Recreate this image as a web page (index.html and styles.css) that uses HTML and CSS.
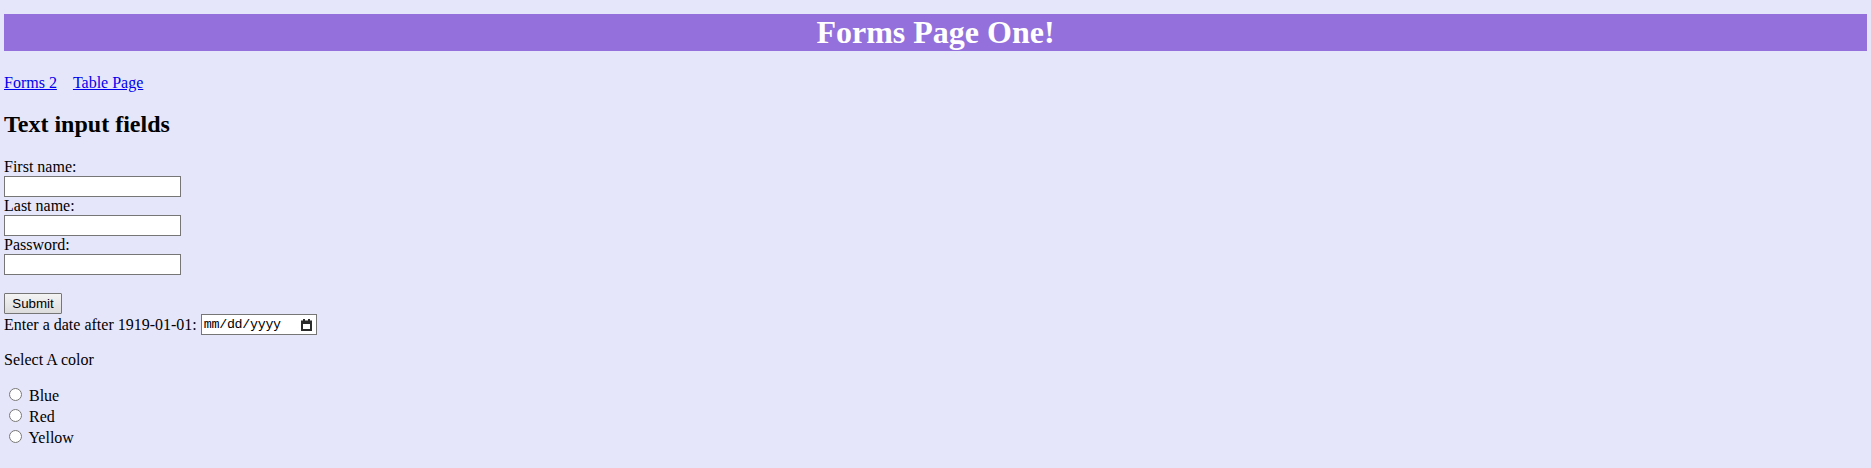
FILE: index.html
```html
<!DOCTYPE html>
<html lang="en">
<head>
<meta charset="utf-8">
<title>Forms Page One!</title>
<link rel="stylesheet" href="styles.css">
</head>
<body>
<div class="page">
  <h1 class="page-title">Forms Page One!</h1>
  <nav class="nav">
    <a class="nav-link" href="#">Forms 2</a>
    <a class="nav-link" href="#">Table Page</a>
  </nav>
  <h2 class="section-title">Text input fields</h2>
  <form class="form">
    <label class="field-label" for="fname">First name:</label>
    <input class="text-field" type="text" id="fname">
    <label class="field-label" for="lname">Last name:</label>
    <input class="text-field" type="text" id="lname">
    <label class="field-label" for="pwd">Password:</label>
    <input class="text-field" type="password" id="pwd">
    <button class="submit-btn" type="button">Submit</button>
    <div class="date-row">
      <label class="date-label">Enter a date after 1919-01-01:</label>
      <div class="date-field">
        <span class="date-text">mm/dd/yyyy</span>
        <svg class="cal-icon" width="11" height="12" viewBox="0 0 11 12"><rect x="1" y="2.5" width="9" height="8.5" fill="none" stroke="#2b2b2b" stroke-width="2"/><rect x="2" y="0" width="2" height="3" fill="#2b2b2b"/><rect x="7" y="0" width="2" height="3" fill="#2b2b2b"/><rect x="1" y="2" width="9" height="3" fill="#2b2b2b"/></svg>
      </div>
    </div>
  </form>
  <p class="color-title">Select A color</p>
  <div class="radio-row"><input class="radio" type="radio" name="color" id="blue"> <label for="blue">Blue</label></div>
  <div class="radio-row"><input class="radio" type="radio" name="color" id="red"> <label for="red">Red</label></div>
  <div class="radio-row"><input class="radio" type="radio" name="color" id="yellow"> <label for="yellow">Yellow</label></div>
</div>
</body>
</html>
```
FILE: styles.css
```css
html, body {
  margin: 0;
  padding: 0;
  background: #e6e6fa;
}
body {
  font-family: "Liberation Serif", "Times New Roman", serif;
  font-size: 16px;
  color: #000;
}
.page {
  padding: 14px 4px 0;
}
.page-title {
  margin: 0 0 22.5px;
  height: 37px;
  line-height: 37px;
  font-size: 32px;
  font-weight: bold;
  text-align: center;
  color: #fff;
  background: #9370db;
}
.nav {
  display: flex;
  gap: 16px;
  height: 18px;
  line-height: 18px;
}
.nav-link {
  color: #0000ee;
  text-decoration: underline;
}
.section-title {
  margin: 19.92px 0 19.92px;
  font-size: 24px;
  font-weight: bold;
  line-height: 27px;
}
.form {
  margin: 0;
}
.field-label {
  display: block;
  height: 18px;
  line-height: 18px;
}
.text-field {
  display: block;
  box-sizing: border-box;
  width: 177px;
  height: 21px;
  margin: 0;
  padding: 1px 2px;
  border: 1px solid #767676;
  border-radius: 0;
  background: #fff;
  font-family: "Liberation Sans", Arial, sans-serif;
  font-size: 13.33px;
}
.submit-btn {
  display: block;
  box-sizing: border-box;
  width: 58px;
  height: 21px;
  margin: 18px 0 0;
  padding: 0;
  border: 1px solid #767676;
  border-radius: 1px;
  background: linear-gradient(#f4f4f4, #dcdcdc);
  font-family: "Liberation Sans", Arial, sans-serif;
  font-size: 13.33px;
  color: #000;
}
.date-row {
  display: flex;
  align-items: center;
  gap: 4px;
  height: 21px;
}
.date-label {
  line-height: 18px;
  padding-top: 1px;
}
.date-field {
  box-sizing: border-box;
  width: 116px;
  height: 21px;
  border: 1px solid #767676;
  background: #fff;
  display: flex;
  align-items: center;
  justify-content: space-between;
  padding: 0 4px 0 2px;
}
.date-text {
  font-family: "Liberation Mono", "DejaVu Sans Mono", monospace;
  font-size: 13.33px;
  letter-spacing: -0.3px;
  color: #000;
}
.cal-icon {
  display: block;
}
.color-title {
  margin: 16px 0;
  line-height: 18px;
}
.radio-row {
  height: 21px;
}
.radio {
  margin: 3px 3px 0 5px;
  width: 13px;
  height: 13px;
  vertical-align: baseline;
}
```
